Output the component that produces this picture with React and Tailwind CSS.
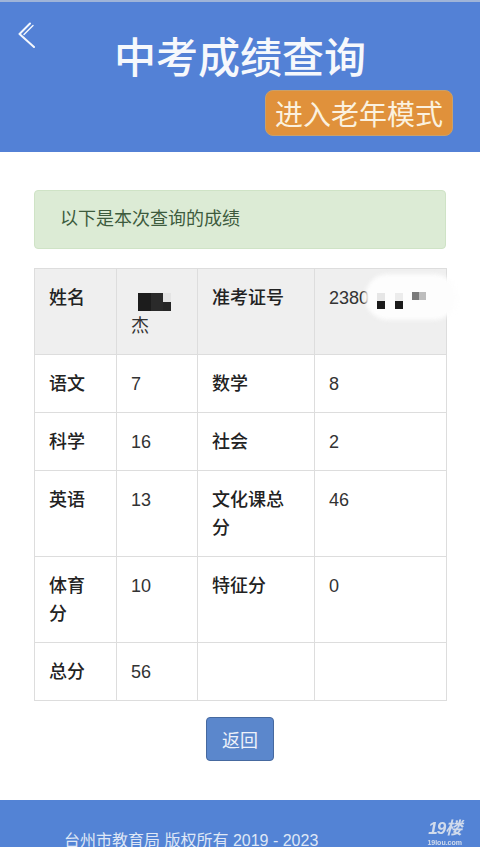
import React from "react";

const rows = [
  [
    { t: "姓名", th: true },
    { name: true },
    { t: "准考证号", th: true },
    { ticket: true },
  ],
  [{ t: "语文", th: true }, { t: "7" }, { t: "数学", th: true }, { t: "8" }],
  [{ t: "科学", th: true }, { t: "16" }, { t: "社会", th: true }, { t: "2" }],
  [{ t: "英语", th: true }, { t: "13" }, { t: "文化课总分", th: true }, { t: "46" }],
  [{ t: "体育分", th: true }, { t: "10" }, { t: "特征分", th: true }, { t: "0" }],
  [{ t: "总分", th: true }, { t: "56" }, { t: "" }, { t: "" }],
];

function BackIcon() {
  return (
    <svg viewBox="0 0 18 26" className="absolute left-[18px] top-[20px] w-[18px] h-[26px]" fill="none" stroke="#f4f7fd" strokeWidth="2" strokeLinecap="round" strokeLinejoin="round">
      <path d="M12 1.5 L1.5 12 L16 25" />
      <path d="M15 3.5 L6 12.5" strokeWidth="1.4" />
    </svg>
  );
}

function NameMosaic() {
  return (
    <div className="flex items-end h-[19px] mt-[8px] ml-[7px]">
      <span className="block w-[13px] h-[18px] bg-[#1c1c1c]" />
      <span className="block w-[12px] h-[18px] bg-[#2a2a2a]" />
      <span className="flex flex-col w-[8px] h-[18px]">
        <span className="block h-[9px] bg-[#e4e4e4]" />
        <span className="block h-[9px] bg-[#262626]" />
      </span>
    </div>
  );
}

function Ticket() {
  return (
    <div className="relative">
      <span>2380</span>
      <span className="absolute left-[36px] top-[-10px] w-[92px] h-[46px] bg-[#fdfdfd] rounded-full blur-[2px]" />
      <span className="absolute left-[48px] top-[9px] w-[8px] h-[8px] bg-[#e6e6e6]" />
      <span className="absolute left-[48px] top-[17px] w-[8px] h-[8px] bg-[#1a1a1a]" />
      <span className="absolute left-[66px] top-[9px] w-[8px] h-[8px] bg-[#ececec]" />
      <span className="absolute left-[66px] top-[17px] w-[8px] h-[8px] bg-[#1a1a1a]" />
      <span className="absolute left-[83px] top-[8px] w-[7px] h-[8px] bg-[#7a7a7a]" />
      <span className="absolute left-[90px] top-[8px] w-[7px] h-[8px] bg-[#bdbdbd]" />
    </div>
  );
}

export default function App() {
  return (
    <div className="min-h-[847px] bg-white flex flex-col font-['Liberation_Sans','Noto_Sans_CJK_SC',sans-serif] text-[#333]">
      {/* Header */}
      <header className="relative h-[152px] bg-[#5381d6] border-t-2 border-[#9fb4d8] flex flex-col items-center pt-[28px]">
        <BackIcon />
        <h1 className="text-[42px] leading-[50px] font-medium text-[#f6f8fc] font-['Noto_Sans_CJK_SC',sans-serif]">
          中考成绩查询
        </h1>
        <div className="self-end mr-[27px] mt-[10px]">
          <button className="h-[46px] px-[9px] rounded-[8px] bg-[#e0913b] border border-[#c9a06a] text-[28px] leading-[44px] text-[#fbf1df] font-['Noto_Sans_CJK_SC',sans-serif]">
            进入老年模式
          </button>
        </div>
      </header>

      {/* Main */}
      <main className="px-[34px] pt-[38px] flex flex-col">
        <div className="h-[59px] rounded-[4px] bg-[#dcebd5] border border-[#cfe3c6] px-[25px] flex items-center text-[18px] text-[#3d5b3d]">
          以下是本次查询的成绩
        </div>

        <table className="mt-[19px] w-[412px] table-fixed border-collapse border border-[#dddddd] text-[18px] leading-[28px]">
          <colgroup>
            <col className="w-[82px]" />
            <col className="w-[81px]" />
            <col className="w-[117px]" />
            <col className="w-[132px]" />
          </colgroup>
          <tbody>
            {rows.map((row, i) => (
              <tr key={i} className={i === 0 ? "bg-[#efefef]" : "bg-white"}>
                {row.map((c, j) => (
                  <td
                    key={j}
                    className={`border border-[#dddddd] align-top px-[14px] py-[14.5px] ${c.th ? "font-medium text-[#222]" : "font-normal text-[#333]"}`}
                  >
                    {c.name ? (
                      <div>
                        <NameMosaic />
                        <div className="mt-[1px]">杰</div>
                      </div>
                    ) : c.ticket ? (
                      <Ticket />
                    ) : (
                      c.t
                    )}
                  </td>
                ))}
              </tr>
            ))}
          </tbody>
        </table>

        <div className="flex justify-center mt-[16px]">
          <button className="w-[68px] h-[44px] rounded-[4px] bg-[#5b87cc] border border-[#46699f] text-[18px] text-[#eef2fa] font-['Noto_Sans_CJK_SC',sans-serif]">
            返回
          </button>
        </div>
      </main>

      {/* Footer */}
      <footer className="relative mt-[39px] h-[70px] bg-[#5383d5] pt-[29px] pl-[64px] text-[16px] leading-[24px] text-[#dfe7f6]">
        台州市教育局 版权所有 2019 - 2023
        <div className="absolute right-[18px] top-[19px] flex flex-col items-center gap-[1px] text-[#dfe5ef] opacity-90">
          <span className="text-[17px] leading-[19px] font-bold italic tracking-[-1px]">19楼</span>
          <span className="text-[7px] leading-[8px] font-bold">19lou.com</span>
        </div>
      </footer>
    </div>
  );
}
